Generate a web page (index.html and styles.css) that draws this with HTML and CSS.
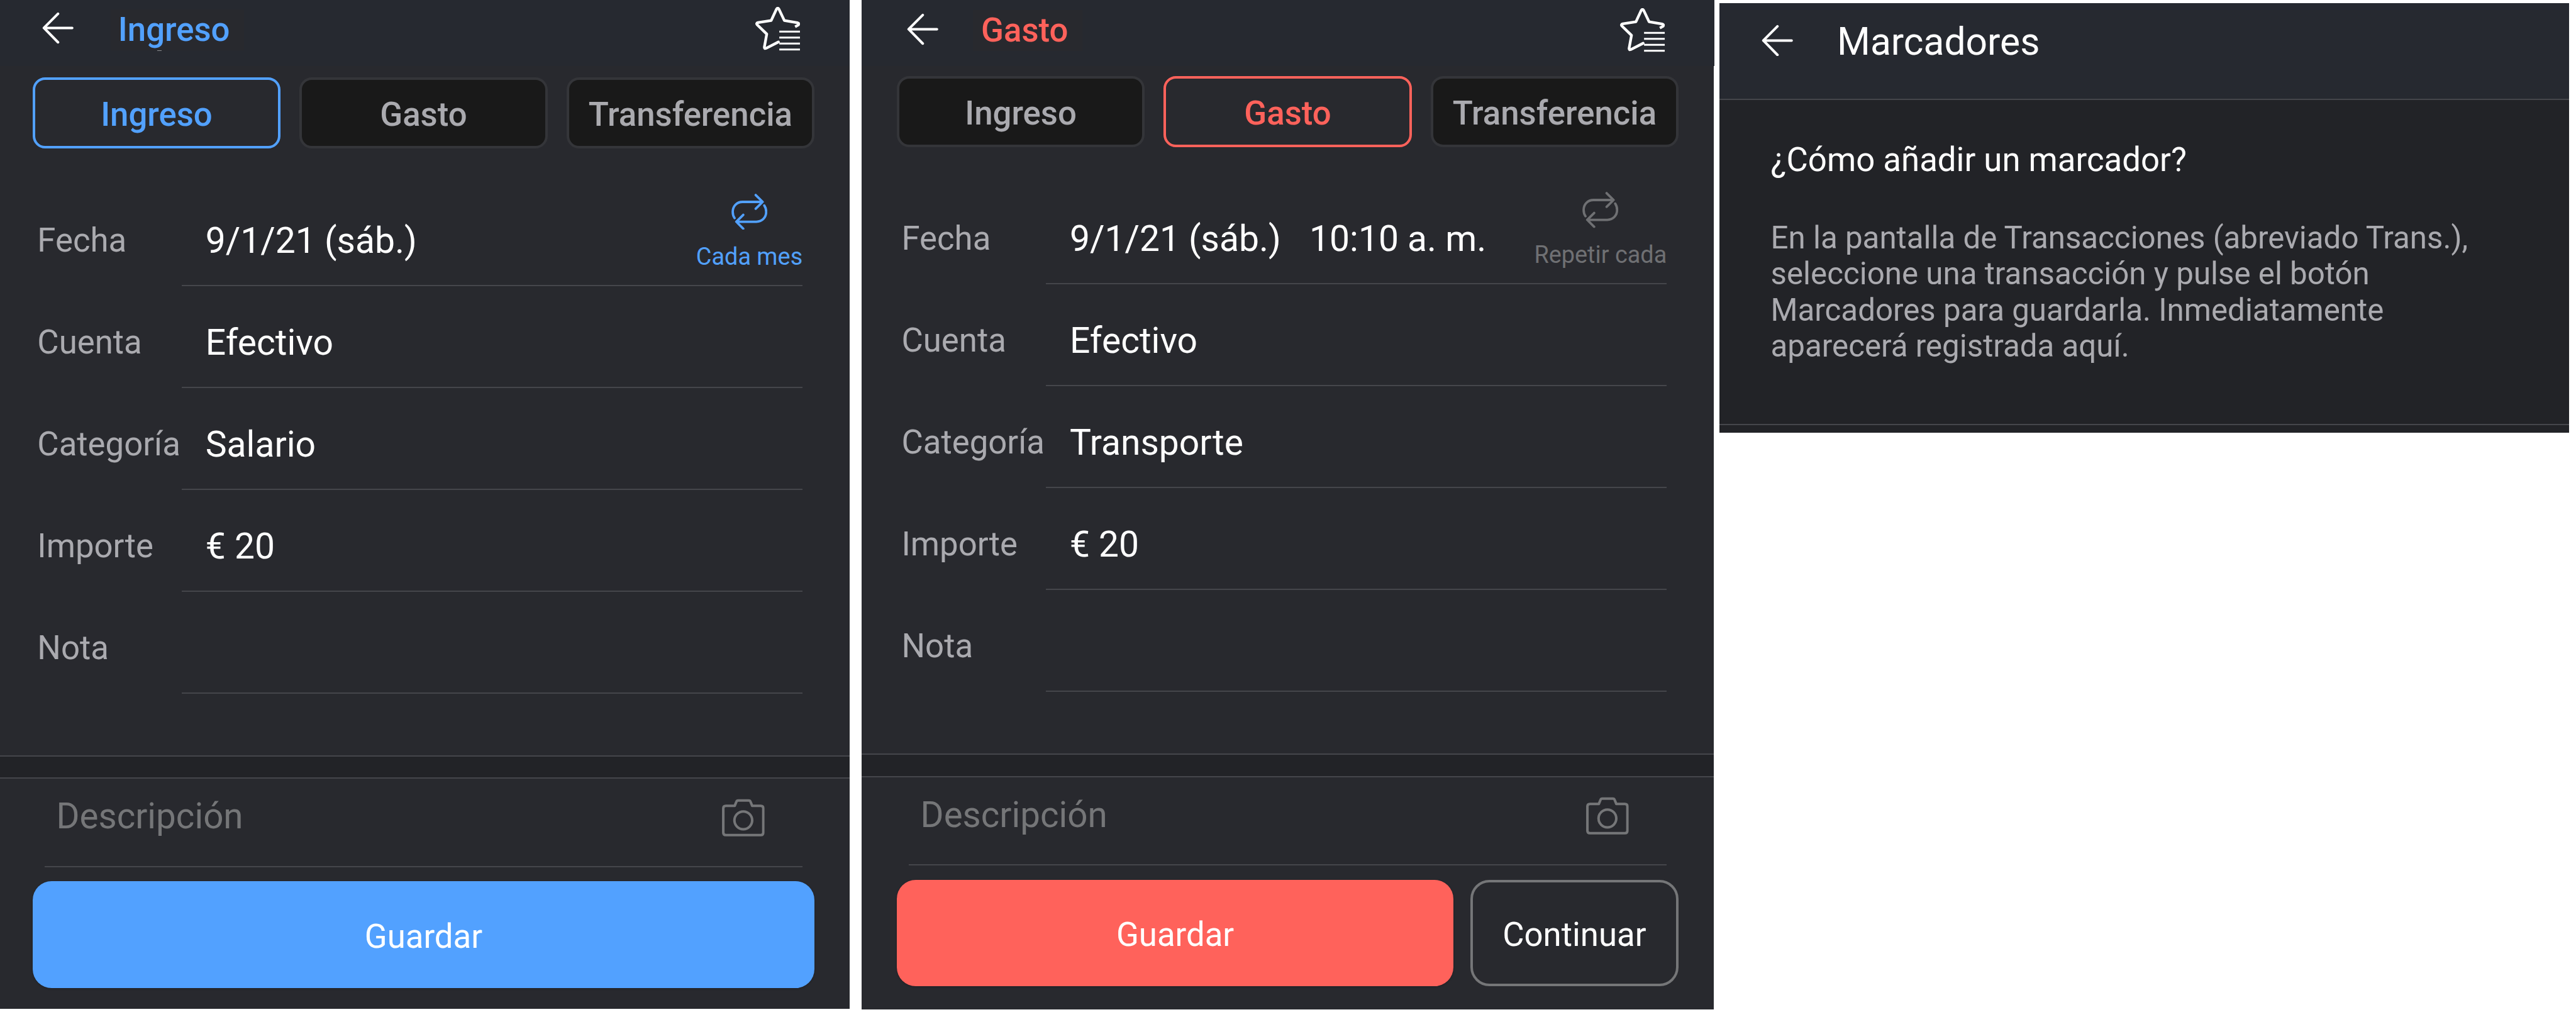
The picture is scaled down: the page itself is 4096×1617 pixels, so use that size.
FILE: index.html
```html
<!DOCTYPE html>
<html lang="es">
<head>
<meta charset="utf-8">
<title>Ingreso, Gasto y Marcadores</title>
<link rel="stylesheet" href="styles.css">
</head>
<body>
<svg class="sprite" aria-hidden="true">
  <symbol id="arrow" viewBox="0 0 53 54"><path d="M26.8 3 L3 27 L26.8 51.2 M3 27 H50.8"/></symbol>
  <symbol id="repeat" viewBox="0 0 61 61"><path d="M52.5 13.8 H19 C8.500 13.800 2.200 21.500 2.200 30.500 C2.200 34.500 3.300 38.300 5.300 41.200 M41 2.200 L52.800 13.800 L41 25.300 M8.500 47.300 H42 C52.500 47.300 58.700 39.500 58.700 30.500 C58.700 26.500 57.500 22.800 55.500 19.800 M20 35.700 L8.200 47.300 L20 59"/></symbol>
  <symbol id="camera" viewBox="0 0 72 64"><path d="M6.500 12 H21.500 L24.200 5.200 Q25 3 27.500 3 H45 Q47.500 3 48.300 5.200 L51 12 H65.500 Q69.800 12 69.800 16.300 V57 Q69.800 61.300 65.500 61.300 H6.500 Q2.200 61.300 2.200 57 V16.300 Q2.200 12 6.500 12 Z"/><circle cx="36" cy="36.500" r="15"/></symbol>
  <symbol id="star" viewBox="0 0 76 74"><path class="star-line" d="M67.200 33.500 L72.600 30.500 Q74.500 27.500 71 26.700 L49 23 L39.800 3.600 Q37.800 .600 35.800 3.600 L26.800 23 L4.500 26.500 Q.800 27.500 3.300 30.200 L19.300 45.800 L15.200 68 Q15.200 71 18 69.900 L39 59.200 V61"/><path class="list-line" d="M40.500 41.700 H75.500 M40.500 51.800 H75.500 M40.500 61.900 H75.500 M40.500 72 H75.500"/></symbol>
</svg>

<main class="board">
  <section class="screen income">
    <header class="bar">
      <svg class="icon back"><use href="#arrow"/></svg>
      <h1 class="title">Ingreso</h1>
      <svg class="icon star"><use href="#star"/></svg>
    </header>
    <nav class="tabs">
      <button class="tab active">Ingreso</button>
      <button class="tab">Gasto</button>
      <button class="tab">Transferencia</button>
    </nav>
    <div class="rows">
      <div class="row"><span class="label">Fecha</span>
        <div class="field"><span>9/1/21 (sáb.)</span>
          <div class="repeat"><svg class="icon loop"><use href="#repeat"/></svg><span>Cada mes</span></div>
        </div>
      </div>
      <div class="row"><span class="label">Cuenta</span><div class="field">Efectivo</div></div>
      <div class="row"><span class="label">Categoría</span><div class="field">Salario</div></div>
      <div class="row"><span class="label">Importe</span><div class="field">€ 20</div></div>
      <div class="row"><span class="label">Nota</span><div class="field"></div></div>
    </div>
    <div class="divider"></div>
    <div class="description"><span>Descripción</span><svg class="icon camera"><use href="#camera"/></svg></div>
    <div class="actions"><button class="save">Guardar</button></div>
  </section>

  <section class="screen expense">
    <header class="bar">
      <svg class="icon back"><use href="#arrow"/></svg>
      <h1 class="title">Gasto</h1>
      <svg class="icon star"><use href="#star"/></svg>
    </header>
    <nav class="tabs">
      <button class="tab">Ingreso</button>
      <button class="tab active">Gasto</button>
      <button class="tab">Transferencia</button>
    </nav>
    <div class="rows">
      <div class="row"><span class="label">Fecha</span>
        <div class="field"><span>9/1/21 (sáb.)</span><span class="time">10:10 a. m.</span>
          <div class="repeat"><svg class="icon loop"><use href="#repeat"/></svg><span>Repetir cada</span></div>
        </div>
      </div>
      <div class="row"><span class="label">Cuenta</span><div class="field">Efectivo</div></div>
      <div class="row"><span class="label">Categoría</span><div class="field">Transporte</div></div>
      <div class="row"><span class="label">Importe</span><div class="field">€ 20</div></div>
      <div class="row"><span class="label">Nota</span><div class="field"></div></div>
    </div>
    <div class="divider"></div>
    <div class="description"><span>Descripción</span><svg class="icon camera"><use href="#camera"/></svg></div>
    <div class="actions"><button class="save">Guardar</button><button class="continue">Continuar</button></div>
  </section>

  <section class="bookmarks">
    <header class="bookmarks-bar">
      <svg class="icon back"><use href="#arrow"/></svg>
      <h1 class="bookmarks-title">Marcadores</h1>
    </header>
    <div class="help">
      <h2 class="question">¿Cómo añadir un marcador?</h2>
      <p class="answer">En la pantalla de Transacciones (abreviado Trans.),<br>seleccione una transacción y pulse el botón<br>Marcadores para guardarla. Inmediatamente<br>aparecerá registrada aquí.</p>
    </div>
  </section>
</main>
</body>
</html>
```
FILE: styles.css
```css
:root {
  --u: 0.94183px;
  --surface: #28292e;
  --bar: #262930;
  --deep: #222327;
  --line: #45464b;
  --muted: #aaaaaf;
  --faint: #757678;
}

* { box-sizing: border-box; }

body {
  margin: 0;
  background: #fff;
  color: #fff;
  font-family: Roboto, "Liberation Sans", sans-serif;
  overflow: hidden;
}

h1, h2, p { margin: 0; font-weight: 400; }

button {
  margin: 0;
  padding: calc(6 * var(--u)) 0 0;
  border: 0;
  background: none;
  font: inherit;
  font-size: calc(56 * var(--u));
  line-height: 1;
  color: #fff;
}

.sprite { display: none; }

.icon {
  display: block;
  flex: none;
  fill: none;
  stroke: currentColor;
  stroke-width: 4.3;
  stroke-linecap: round;
  stroke-linejoin: round;
}

.star-line { stroke-linecap: butt; stroke-width: 4.6; }
.list-line { stroke-linecap: butt; stroke-width: 3.2; }

.board {
  display: flex;
  align-items: flex-start;
  width: 4096px;
  height: 1617px;
}

.screen {
  --shift: 0;
  flex: none;
  display: flex;
  flex-direction: column;
  background: var(--surface);
}

.income {
  --accent: #52a1ff;
  width: calc(1434 * var(--u));
  height: calc(1703 * var(--u));
}

.expense {
  --accent: #ff625b;
  --shift: 4;
  width: calc(1438 * var(--u));
  height: calc(1704 * var(--u));
  margin-left: calc(21 * var(--u));
}

.bar {
  display: flex;
  align-items: flex-start;
  height: calc(112 * var(--u));
  padding-left: calc(71 * var(--u));
  padding-right: calc(83 * var(--u));
  background: var(--bar);
}

.expense .bar {
  margin-right: -1px;
  padding-left: calc(76 * var(--u));
}

.back {
  width: calc(53 * var(--u));
  height: calc(54 * var(--u));
  margin-top: calc(20.5 * var(--u));
}

.expense .bar .back { margin-top: calc(22.5 * var(--u)); }

.title {
  position: relative;
  margin: calc(16 * var(--u)) 0 0 calc(63 * var(--u));
  padding: 0 calc(24 * var(--u)) 0 calc(12.5 * var(--u));
  background: var(--surface);
  color: var(--accent);
  font-size: calc(56 * var(--u));
  font-weight: 500;
  line-height: calc(69 * var(--u));
}

.expense .title {
  margin: calc(17 * var(--u)) 0 0 calc(59 * var(--u));
  padding-left: calc(13.5 * var(--u));
}

/* tail of the descender below the title */
.income .title::after {
  content: "";
  position: absolute;
  left: calc(78 * var(--u));
  top: 100%;
  width: calc(8 * var(--u));
  height: 1px;
  background: #8b8c90;
}

.star {
  width: calc(76 * var(--u));
  height: calc(74 * var(--u));
  margin: calc(12 * var(--u)) 0 0 auto;
}

.expense .star { margin-top: calc(14 * var(--u)); }

.tabs {
  display: flex;
  gap: calc(32 * var(--u));
  height: calc(139 * var(--u));
  padding: calc(19 * var(--u)) calc(59 * var(--u)) 0 calc((55 + var(--shift)) * var(--u));
}

.expense .tabs {
  height: calc(136 * var(--u));
  padding-top: calc(16 * var(--u));
}

.tab {
  flex: 1 1 0;
  min-width: 0;
  border: 4px solid #343539;
  border-radius: calc(21 * var(--u));
  background: #191919;
  color: var(--muted);
  font-weight: 500;
}

.tab.active {
  border-color: var(--accent);
  background: var(--surface);
  color: var(--accent);
}

.rows {
  margin-top: calc(60 * var(--u));
  padding: 0 calc(79 * var(--u)) 0 calc((63 + var(--shift)) * var(--u));
}

.row {
  display: flex;
  height: calc(172 * var(--u));
}

.label {
  flex: none;
  width: calc(244 * var(--u));
  padding-top: calc(19.5 * var(--u));
  color: var(--muted);
  font-size: calc(56 * var(--u));
  line-height: calc(152 * var(--u));
  white-space: nowrap;
}

.field {
  flex: 1;
  display: flex;
  border-bottom: 2px solid var(--line);
  padding: calc(19 * var(--u)) 0 0 calc(40 * var(--u));
  font-size: calc(60.5 * var(--u));
  line-height: calc(152 * var(--u));
  white-space: nowrap;
}

.time { margin-left: calc(48 * var(--u)); }

.repeat {
  display: flex;
  flex-direction: column;
  align-items: center;
  margin-left: auto;
  margin-top: calc(-3 * var(--u));
  font-size: calc(40.2 * var(--u));
  line-height: calc(50 * var(--u));
  color: var(--accent);
}

.expense .repeat { color: #6f7073; }

.loop {
  width: calc(61 * var(--u));
  height: calc(61 * var(--u));
  margin-bottom: calc(21 * var(--u));
  stroke-width: 4;
}

.divider {
  height: calc(40 * var(--u));
  margin-top: calc(104 * var(--u));
  border: solid var(--line);
  border-width: 2px 0;
  background: var(--deep);
}

.description {
  display: flex;
  justify-content: space-between;
  height: calc(149 * var(--u));
  margin: 0 calc(79 * var(--u)) 0 calc((75 + var(--shift)) * var(--u));
  padding: 0 calc(64 * var(--u)) 0 calc(20 * var(--u));
  border-bottom: 2px solid var(--line);
  color: var(--faint);
  font-size: calc(60 * var(--u));
  line-height: calc(129 * var(--u));
}

.camera {
  width: calc(72 * var(--u));
  height: calc(64 * var(--u));
  margin-top: calc(33 * var(--u));
}

.actions {
  display: flex;
  gap: calc(28 * var(--u));
  height: calc(180 * var(--u));
  margin: calc(24 * var(--u)) calc(59 * var(--u)) 0 calc((55 + var(--shift)) * var(--u));
}

.save {
  flex: 1;
  border-radius: calc(32 * var(--u));
  background: var(--accent);
  box-shadow: 0 1px 3px rgba(0, 0, 0, .25);
}

.continue {
  flex: none;
  width: calc(352 * var(--u));
  border: 4px solid #757678;
  border-radius: calc(32 * var(--u));
}

.bookmarks {
  flex: none;
  width: calc(1434 * var(--u));
  height: calc(726 * var(--u));
  margin: calc(5 * var(--u)) 0 0 calc(10 * var(--u));
  background: var(--deep);
}

.bookmarks-bar {
  display: flex;
  height: calc(164 * var(--u));
  padding-left: calc(71 * var(--u));
  border-bottom: 2px solid var(--line);
  background: var(--bar);
}

.bookmarks-bar .back { margin-top: calc(36 * var(--u)); }

.bookmarks-title {
  margin-left: calc(74.5 * var(--u));
  font-size: calc(64.3 * var(--u));
  line-height: calc(131.5 * var(--u));
}

.help {
  height: calc(549 * var(--u));
  padding: calc(61 * var(--u)) 0 0 calc(86.5 * var(--u));
  border-bottom: 2px solid var(--line);
}

.question {
  font-size: calc(56 * var(--u));
  line-height: calc(80 * var(--u));
}

.answer {
  margin-top: calc(61.5 * var(--u));
  color: var(--muted);
  font-size: calc(52.3 * var(--u));
  line-height: calc(61 * var(--u));
  white-space: nowrap;
}
```
